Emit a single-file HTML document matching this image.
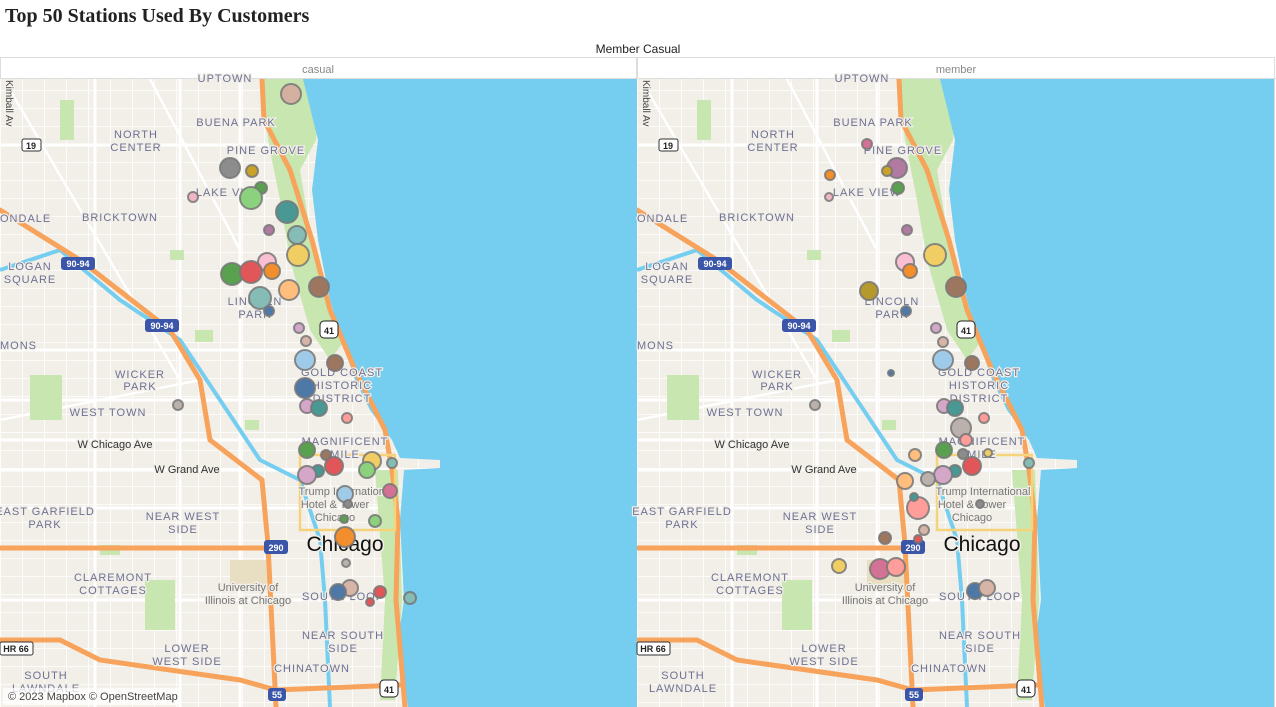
<!DOCTYPE html>
<html><head><meta charset="utf-8">
<style>
html,body{margin:0;padding:0;background:#fff;width:1276px;height:707px;overflow:hidden}
.t{position:absolute;left:5px;top:5px;font:bold 20px "Liberation Serif",serif;color:#222}
.h{position:absolute;top:42px;left:0;width:1276px;text-align:center;font:12px "Liberation Sans",sans-serif;color:#222}
svg{position:absolute;left:0;top:0}
.lb{font:11px "Liberation Sans",sans-serif;fill:#6e7193;letter-spacing:1px;stroke:#f2efe9;stroke-width:2.5px;paint-order:stroke}
.lk{font:11px "Liberation Sans",sans-serif;fill:#333;stroke:#f2efe9;stroke-width:2.5px;paint-order:stroke}
.ct{font:21px "Liberation Sans",sans-serif;fill:#111;stroke:#f2efe9;stroke-width:3px;paint-order:stroke}
.c circle{stroke:#777;stroke-width:2;stroke-opacity:.85}
</style></head><body>
<div class="t">Top 50 Stations Used By Customers</div>
<div class="h">Member Casual</div>
<svg width="1276" height="707" viewBox="0 0 1276 707">
<defs>
<pattern id="grid" width="22" height="18" patternUnits="userSpaceOnUse">
<rect width="22" height="18" fill="#f2efe9"/>
<path d="M0 0H22M0 0V18" stroke="#fff" stroke-width="1.6"/>
</pattern>
<clipPath id="cp"><rect x="0" y="79" width="637" height="628"/></clipPath>
<g id="base">
<rect x="0" y="79" width="637" height="628" fill="url(#grid)"/>
<path d="M0 145H300M0 350H330M0 400H360M0 440H380M0 470H390M0 508H400M0 600H400M95 79V707M180 79V707M240 79V707" stroke="#fff" stroke-width="3"/>
<path d="M10 90L180 380M0 420L200 380M150 79L240 250" stroke="#fff" stroke-width="2.5" fill="none"/>
<path d="M262 79H320L316 140L300 170L310 230L330 300L345 340L330 360L310 330L290 260L280 200L268 140Z" fill="#c8e6b0"/>
<path d="M375 470L398 470L402 600L395 700L380 700L385 600Z" fill="#c8e6b0"/>
<rect x="30" y="375" width="32" height="45" fill="#c8e6b0"/><rect x="145" y="580" width="30" height="50" fill="#c8e6b0"/>
<rect x="60" y="100" width="14" height="40" fill="#c8e6b0"/><rect x="195" y="330" width="18" height="12" fill="#c8e6b0"/>
<rect x="100" y="545" width="20" height="10" fill="#c8e6b0"/><rect x="230" y="560" width="40" height="30" fill="#e8dfc3"/>
<rect x="170" y="250" width="14" height="10" fill="#c8e6b0"/><rect x="245" y="420" width="14" height="10" fill="#c8e6b0"/>
<path d="M303 79H637V707H408L398 640L404 600L400 520L404 470L440 468L440 460L400 458L392 440L370 410L355 380L345 350L330 300L318 240L312 190L318 140Z" fill="#75cdf0"/>
<path d="M0 270L60 250L120 300L180 340L220 400L260 460L300 480M300 480L320 540L325 600L330 707" stroke="#75cdf0" stroke-width="4" fill="none"/>
<g stroke="#f7a35c" stroke-width="5" fill="none" stroke-linecap="round">
<path d="M0 210L80 260L170 330L200 380L210 440L262 480L268 545L276 707"/>
<path d="M0 548H268"/>
<path d="M262 79L264 120L290 170L312 240L330 310L355 370L385 430L392 470L398 520L396 600L405 707"/>
<path d="M0 640L60 640L100 660L240 680L276 690L400 685"/>
</g>
<path d="M300 455H395V530H300Z" stroke="#f5d37a" stroke-width="2.5" fill="none"/>
</g>
</defs>

<rect x="0.5" y="57.5" width="636" height="649" fill="#fff" stroke="#ddd"/>
<rect x="637.5" y="57.5" width="637" height="649" fill="#fff" stroke="#ddd"/>
<line x1="0" y1="78.5" x2="1276" y2="78.5" stroke="#ddd"/>
<text x="318" y="73" text-anchor="middle" style="font:11px 'Liberation Sans',sans-serif;fill:#888">casual</text>
<text x="956" y="73" text-anchor="middle" style="font:11px 'Liberation Sans',sans-serif;fill:#888">member</text>

<g clip-path="url(#cp)"><use href="#base"/></g>
<g transform="translate(637 0)"><g clip-path="url(#cp)"><use href="#base"/></g></g>

<g>
<text class="lb" x="225" y="82" text-anchor="middle">UPTOWN</text>
<text class="lb" x="236" y="126" text-anchor="middle">BUENA PARK</text>
<text class="lb" x="136" y="138" text-anchor="middle">NORTH</text><text class="lb" x="136" y="151" text-anchor="middle">CENTER</text>
<text class="lb" x="266" y="154" text-anchor="middle">PINE GROVE</text>
<text class="lb" x="230" y="196" text-anchor="middle">LAKE VIEW</text>
<text class="lb" x="120" y="221" text-anchor="middle">BRICKTOWN</text>
<text class="lb" x="0" y="222">ONDALE</text>
<text class="lb" x="30" y="270" text-anchor="middle">LOGAN</text><text class="lb" x="30" y="283" text-anchor="middle">SQUARE</text>
<text class="lb" x="255" y="305" text-anchor="middle">LINCOLN</text><text class="lb" x="255" y="318" text-anchor="middle">PARK</text>
<text class="lb" x="0" y="349">MONS</text>
<text class="lb" x="140" y="378" text-anchor="middle">WICKER</text><text class="lb" x="140" y="390" text-anchor="middle">PARK</text>
<text class="lb" x="342" y="376" text-anchor="middle">GOLD COAST</text><text class="lb" x="342" y="389" text-anchor="middle">HISTORIC</text><text class="lb" x="342" y="402" text-anchor="middle">DISTRICT</text>
<text class="lb" x="108" y="416" text-anchor="middle">WEST TOWN</text>
<text class="lk" x="115" y="448" text-anchor="middle">W Chicago Ave</text>
<text class="lk" x="187" y="473" text-anchor="middle">W Grand Ave</text>
<text class="lb" x="345" y="445" text-anchor="middle">MAGNIFICENT</text><text class="lb" x="345" y="458" text-anchor="middle">MILE</text>
<text class="lk" x="346" y="495" text-anchor="middle" style="fill:#777">Trump International</text>
<text class="lk" x="335" y="508" text-anchor="middle" style="fill:#777">Hotel &amp; Tower</text>
<text class="lk" x="335" y="521" text-anchor="middle" style="fill:#777">Chicago</text>
<text class="lb" x="45" y="515" text-anchor="middle">EAST GARFIELD</text><text class="lb" x="45" y="528" text-anchor="middle">PARK</text>
<text class="lb" x="183" y="520" text-anchor="middle">NEAR WEST</text><text class="lb" x="183" y="533" text-anchor="middle">SIDE</text>
<text class="ct" x="345" y="551" text-anchor="middle">Chicago</text>
<text class="lb" x="113" y="581" text-anchor="middle">CLAREMONT</text><text class="lb" x="113" y="594" text-anchor="middle">COTTAGES</text>
<text class="lk" x="248" y="591" text-anchor="middle" style="fill:#777">University of</text>
<text class="lk" x="248" y="604" text-anchor="middle" style="fill:#777">Illinois at Chicago</text>
<text class="lb" x="343" y="600" text-anchor="middle">SOUTH LOOP</text>
<text class="lb" x="343" y="639" text-anchor="middle">NEAR SOUTH</text><text class="lb" x="343" y="652" text-anchor="middle">SIDE</text>
<text class="lb" x="187" y="652" text-anchor="middle">LOWER</text><text class="lb" x="187" y="665" text-anchor="middle">WEST SIDE</text>
<text class="lb" x="312" y="672" text-anchor="middle">CHINATOWN</text>
<text class="lb" x="46" y="679" text-anchor="middle">SOUTH</text><text class="lb" x="46" y="692" text-anchor="middle">LAWNDALE</text>
<rect x="61" y="257" width="34" height="13" rx="3" fill="#3b55a8"/><text x="78" y="267" text-anchor="middle" style="font:bold 9px 'Liberation Sans',sans-serif;fill:#fff">90-94</text>
<rect x="145" y="319" width="34" height="13" rx="3" fill="#3b55a8"/><text x="162" y="329" text-anchor="middle" style="font:bold 9px 'Liberation Sans',sans-serif;fill:#fff">90-94</text>
<rect x="264" y="540" width="24" height="14" rx="3" fill="#3b55a8"/><text x="276" y="551" text-anchor="middle" style="font:bold 9px 'Liberation Sans',sans-serif;fill:#fff">290</text>
<rect x="268" y="688" width="18" height="13" rx="3" fill="#3b55a8"/><text x="277" y="698" text-anchor="middle" style="font:bold 9px 'Liberation Sans',sans-serif;fill:#fff">55</text>
<rect x="320" y="321" width="18" height="17" rx="4" fill="#fff" stroke="#222"/><text x="329" y="334" text-anchor="middle" style="font:bold 9px 'Liberation Sans',sans-serif;fill:#222">41</text>
<rect x="380" y="680" width="18" height="17" rx="4" fill="#fff" stroke="#222"/><text x="389" y="693" text-anchor="middle" style="font:bold 9px 'Liberation Sans',sans-serif;fill:#222">41</text>
<rect x="22" y="139" width="19" height="12" rx="2" fill="#fff" stroke="#333"/><text x="31" y="149" text-anchor="middle" style="font:bold 9px 'Liberation Sans',sans-serif;fill:#222">19</text>
<rect x="0" y="642" width="33" height="13" rx="2" fill="#fff" stroke="#333"/><text x="16" y="652" text-anchor="middle" style="font:bold 9px 'Liberation Sans',sans-serif;fill:#222">HR 66</text>
<text x="6" y="80" transform="rotate(90 6 80)" style="font:10px 'Liberation Sans',sans-serif;fill:#444">Kimball Av</text>
</g>
<g transform="translate(637 0)">
<text class="lb" x="225" y="82" text-anchor="middle">UPTOWN</text>
<text class="lb" x="236" y="126" text-anchor="middle">BUENA PARK</text>
<text class="lb" x="136" y="138" text-anchor="middle">NORTH</text><text class="lb" x="136" y="151" text-anchor="middle">CENTER</text>
<text class="lb" x="266" y="154" text-anchor="middle">PINE GROVE</text>
<text class="lb" x="230" y="196" text-anchor="middle">LAKE VIEW</text>
<text class="lb" x="120" y="221" text-anchor="middle">BRICKTOWN</text>
<text class="lb" x="0" y="222">ONDALE</text>
<text class="lb" x="30" y="270" text-anchor="middle">LOGAN</text><text class="lb" x="30" y="283" text-anchor="middle">SQUARE</text>
<text class="lb" x="255" y="305" text-anchor="middle">LINCOLN</text><text class="lb" x="255" y="318" text-anchor="middle">PARK</text>
<text class="lb" x="0" y="349">MONS</text>
<text class="lb" x="140" y="378" text-anchor="middle">WICKER</text><text class="lb" x="140" y="390" text-anchor="middle">PARK</text>
<text class="lb" x="342" y="376" text-anchor="middle">GOLD COAST</text><text class="lb" x="342" y="389" text-anchor="middle">HISTORIC</text><text class="lb" x="342" y="402" text-anchor="middle">DISTRICT</text>
<text class="lb" x="108" y="416" text-anchor="middle">WEST TOWN</text>
<text class="lk" x="115" y="448" text-anchor="middle">W Chicago Ave</text>
<text class="lk" x="187" y="473" text-anchor="middle">W Grand Ave</text>
<text class="lb" x="345" y="445" text-anchor="middle">MAGNIFICENT</text><text class="lb" x="345" y="458" text-anchor="middle">MILE</text>
<text class="lk" x="346" y="495" text-anchor="middle" style="fill:#777">Trump International</text>
<text class="lk" x="335" y="508" text-anchor="middle" style="fill:#777">Hotel &amp; Tower</text>
<text class="lk" x="335" y="521" text-anchor="middle" style="fill:#777">Chicago</text>
<text class="lb" x="45" y="515" text-anchor="middle">EAST GARFIELD</text><text class="lb" x="45" y="528" text-anchor="middle">PARK</text>
<text class="lb" x="183" y="520" text-anchor="middle">NEAR WEST</text><text class="lb" x="183" y="533" text-anchor="middle">SIDE</text>
<text class="ct" x="345" y="551" text-anchor="middle">Chicago</text>
<text class="lb" x="113" y="581" text-anchor="middle">CLAREMONT</text><text class="lb" x="113" y="594" text-anchor="middle">COTTAGES</text>
<text class="lk" x="248" y="591" text-anchor="middle" style="fill:#777">University of</text>
<text class="lk" x="248" y="604" text-anchor="middle" style="fill:#777">Illinois at Chicago</text>
<text class="lb" x="343" y="600" text-anchor="middle">SOUTH LOOP</text>
<text class="lb" x="343" y="639" text-anchor="middle">NEAR SOUTH</text><text class="lb" x="343" y="652" text-anchor="middle">SIDE</text>
<text class="lb" x="187" y="652" text-anchor="middle">LOWER</text><text class="lb" x="187" y="665" text-anchor="middle">WEST SIDE</text>
<text class="lb" x="312" y="672" text-anchor="middle">CHINATOWN</text>
<text class="lb" x="46" y="679" text-anchor="middle">SOUTH</text><text class="lb" x="46" y="692" text-anchor="middle">LAWNDALE</text>
<rect x="61" y="257" width="34" height="13" rx="3" fill="#3b55a8"/><text x="78" y="267" text-anchor="middle" style="font:bold 9px 'Liberation Sans',sans-serif;fill:#fff">90-94</text>
<rect x="145" y="319" width="34" height="13" rx="3" fill="#3b55a8"/><text x="162" y="329" text-anchor="middle" style="font:bold 9px 'Liberation Sans',sans-serif;fill:#fff">90-94</text>
<rect x="264" y="540" width="24" height="14" rx="3" fill="#3b55a8"/><text x="276" y="551" text-anchor="middle" style="font:bold 9px 'Liberation Sans',sans-serif;fill:#fff">290</text>
<rect x="268" y="688" width="18" height="13" rx="3" fill="#3b55a8"/><text x="277" y="698" text-anchor="middle" style="font:bold 9px 'Liberation Sans',sans-serif;fill:#fff">55</text>
<rect x="320" y="321" width="18" height="17" rx="4" fill="#fff" stroke="#222"/><text x="329" y="334" text-anchor="middle" style="font:bold 9px 'Liberation Sans',sans-serif;fill:#222">41</text>
<rect x="380" y="680" width="18" height="17" rx="4" fill="#fff" stroke="#222"/><text x="389" y="693" text-anchor="middle" style="font:bold 9px 'Liberation Sans',sans-serif;fill:#222">41</text>
<rect x="22" y="139" width="19" height="12" rx="2" fill="#fff" stroke="#333"/><text x="31" y="149" text-anchor="middle" style="font:bold 9px 'Liberation Sans',sans-serif;fill:#222">19</text>
<rect x="0" y="642" width="33" height="13" rx="2" fill="#fff" stroke="#333"/><text x="16" y="652" text-anchor="middle" style="font:bold 9px 'Liberation Sans',sans-serif;fill:#222">HR 66</text>
<text x="6" y="80" transform="rotate(90 6 80)" style="font:10px 'Liberation Sans',sans-serif;fill:#444">Kimball Av</text>
</g>

<g class="c">
<circle cx="291" cy="94" r="10" fill="#d4b0a0"/><circle cx="230" cy="168" r="10" fill="#8c8c8c"/><circle cx="252" cy="171" r="6" fill="#c9a227"/>
<circle cx="261" cy="188" r="6" fill="#59a14f"/><circle cx="251" cy="198" r="11" fill="#8cd17d"/><circle cx="193" cy="197" r="5" fill="#f1b6c6"/>
<circle cx="287" cy="212" r="11" fill="#499894"/><circle cx="269" cy="230" r="5" fill="#b07aa1"/><circle cx="297" cy="235" r="9" fill="#86bcb6"/>
<circle cx="298" cy="255" r="11" fill="#f1ce63"/><circle cx="267" cy="262" r="9" fill="#fabfd2"/><circle cx="232" cy="274" r="11" fill="#59a14f"/>
<circle cx="251" cy="272" r="11" fill="#e15759"/><circle cx="272" cy="271" r="8" fill="#f28e2b"/><circle cx="289" cy="290" r="10" fill="#ffbe7d"/>
<circle cx="319" cy="287" r="10" fill="#9d7660"/><circle cx="260" cy="298" r="11" fill="#86bcb6"/><circle cx="269" cy="311" r="5" fill="#4e79a7"/>
<circle cx="299" cy="328" r="5" fill="#d4a6c8"/><circle cx="306" cy="341" r="5" fill="#d7b5a6"/><circle cx="305" cy="360" r="10" fill="#a0cbe8"/>
<circle cx="335" cy="363" r="8" fill="#9d7660"/><circle cx="305" cy="388" r="10" fill="#4e79a7"/><circle cx="307" cy="406" r="7" fill="#d4a6c8"/>
<circle cx="319" cy="408" r="8" fill="#499894"/><circle cx="347" cy="418" r="5" fill="#ff9d9a"/><circle cx="178" cy="405" r="5" fill="#bab0ac"/>
<circle cx="307" cy="450" r="8" fill="#59a14f"/><circle cx="326" cy="455" r="5" fill="#9d7660"/><circle cx="334" cy="466" r="9" fill="#e15759"/>
<circle cx="318" cy="471" r="6" fill="#499894"/><circle cx="307" cy="475" r="9" fill="#d4a6c8"/><circle cx="372" cy="461" r="9" fill="#f1ce63"/>
<circle cx="367" cy="470" r="8" fill="#8cd17d"/><circle cx="392" cy="463" r="5" fill="#86bcb6"/><circle cx="390" cy="491" r="7" fill="#d37295"/>
<circle cx="345" cy="494" r="8" fill="#a0cbe8"/><circle cx="348" cy="504" r="4" fill="#8c8c8c"/><circle cx="344" cy="519" r="4" fill="#59a14f"/>
<circle cx="375" cy="521" r="6" fill="#8cd17d"/><circle cx="345" cy="537" r="10" fill="#f28e2b"/><circle cx="346" cy="563" r="4" fill="#bab0ac"/>
<circle cx="350" cy="588" r="8" fill="#d7b5a6"/><circle cx="338" cy="592" r="8" fill="#4e79a7"/><circle cx="380" cy="592" r="6" fill="#e15759"/>
<circle cx="370" cy="602" r="4" fill="#e15759"/><circle cx="410" cy="598" r="6" fill="#86bcb6"/>

<circle cx="867" cy="144" r="5" fill="#d37295"/><circle cx="897" cy="168" r="10" fill="#b07aa1"/><circle cx="887" cy="171" r="5" fill="#c9a227"/>
<circle cx="898" cy="188" r="6" fill="#59a14f"/><circle cx="830" cy="175" r="5" fill="#f28e2b"/><circle cx="829" cy="197" r="4" fill="#f1b6c6"/>
<circle cx="907" cy="230" r="5" fill="#b07aa1"/><circle cx="935" cy="255" r="11" fill="#f1ce63"/><circle cx="905" cy="262" r="9" fill="#fabfd2"/>
<circle cx="910" cy="271" r="7" fill="#f28e2b"/><circle cx="956" cy="287" r="10" fill="#9d7660"/><circle cx="869" cy="291" r="9" fill="#b6992d"/>
<circle cx="906" cy="311" r="5" fill="#4e79a7"/><circle cx="936" cy="328" r="5" fill="#d4a6c8"/><circle cx="943" cy="342" r="5" fill="#d7b5a6"/>
<circle cx="943" cy="360" r="10" fill="#a0cbe8"/><circle cx="972" cy="363" r="7" fill="#9d7660"/><circle cx="891" cy="373" r="3" fill="#4e79a7"/>
<circle cx="815" cy="405" r="5" fill="#bab0ac"/><circle cx="944" cy="406" r="7" fill="#d4a6c8"/><circle cx="955" cy="408" r="8" fill="#499894"/>
<circle cx="984" cy="418" r="5" fill="#ff9d9a"/><circle cx="961" cy="428" r="10" fill="#bab0ac"/><circle cx="966" cy="440" r="6" fill="#ff9d9a"/>
<circle cx="944" cy="450" r="8" fill="#59a14f"/><circle cx="963" cy="454" r="5" fill="#8c8c8c"/><circle cx="988" cy="453" r="4" fill="#f1ce63"/>
<circle cx="915" cy="455" r="6" fill="#ffbe7d"/><circle cx="972" cy="466" r="9" fill="#e15759"/><circle cx="955" cy="471" r="6" fill="#499894"/>
<circle cx="943" cy="475" r="9" fill="#d4a6c8"/><circle cx="928" cy="479" r="7" fill="#bab0ac"/><circle cx="905" cy="481" r="8" fill="#ffbe7d"/>
<circle cx="1029" cy="463" r="5" fill="#86bcb6"/><circle cx="918" cy="508" r="11" fill="#ff9d9a"/><circle cx="914" cy="497" r="4" fill="#499894"/>
<circle cx="980" cy="504" r="4" fill="#8c8c8c"/><circle cx="924" cy="530" r="5" fill="#d7b5a6"/><circle cx="885" cy="538" r="6" fill="#9d7660"/>
<circle cx="918" cy="539" r="4" fill="#e15759"/><circle cx="839" cy="566" r="7" fill="#f1ce63"/><circle cx="880" cy="569" r="10" fill="#d37295"/>
<circle cx="896" cy="567" r="9" fill="#ff9d9a"/><circle cx="975" cy="591" r="8" fill="#4e79a7"/><circle cx="987" cy="588" r="8" fill="#d7b5a6"/>
</g>
<rect x="3" y="688" width="178" height="17" fill="#fff" fill-opacity=".75"/>
<text x="8" y="700" style="font:11px 'Liberation Sans',sans-serif;fill:#444">© 2023 Mapbox © OpenStreetMap</text>
</svg>
</body></html>
